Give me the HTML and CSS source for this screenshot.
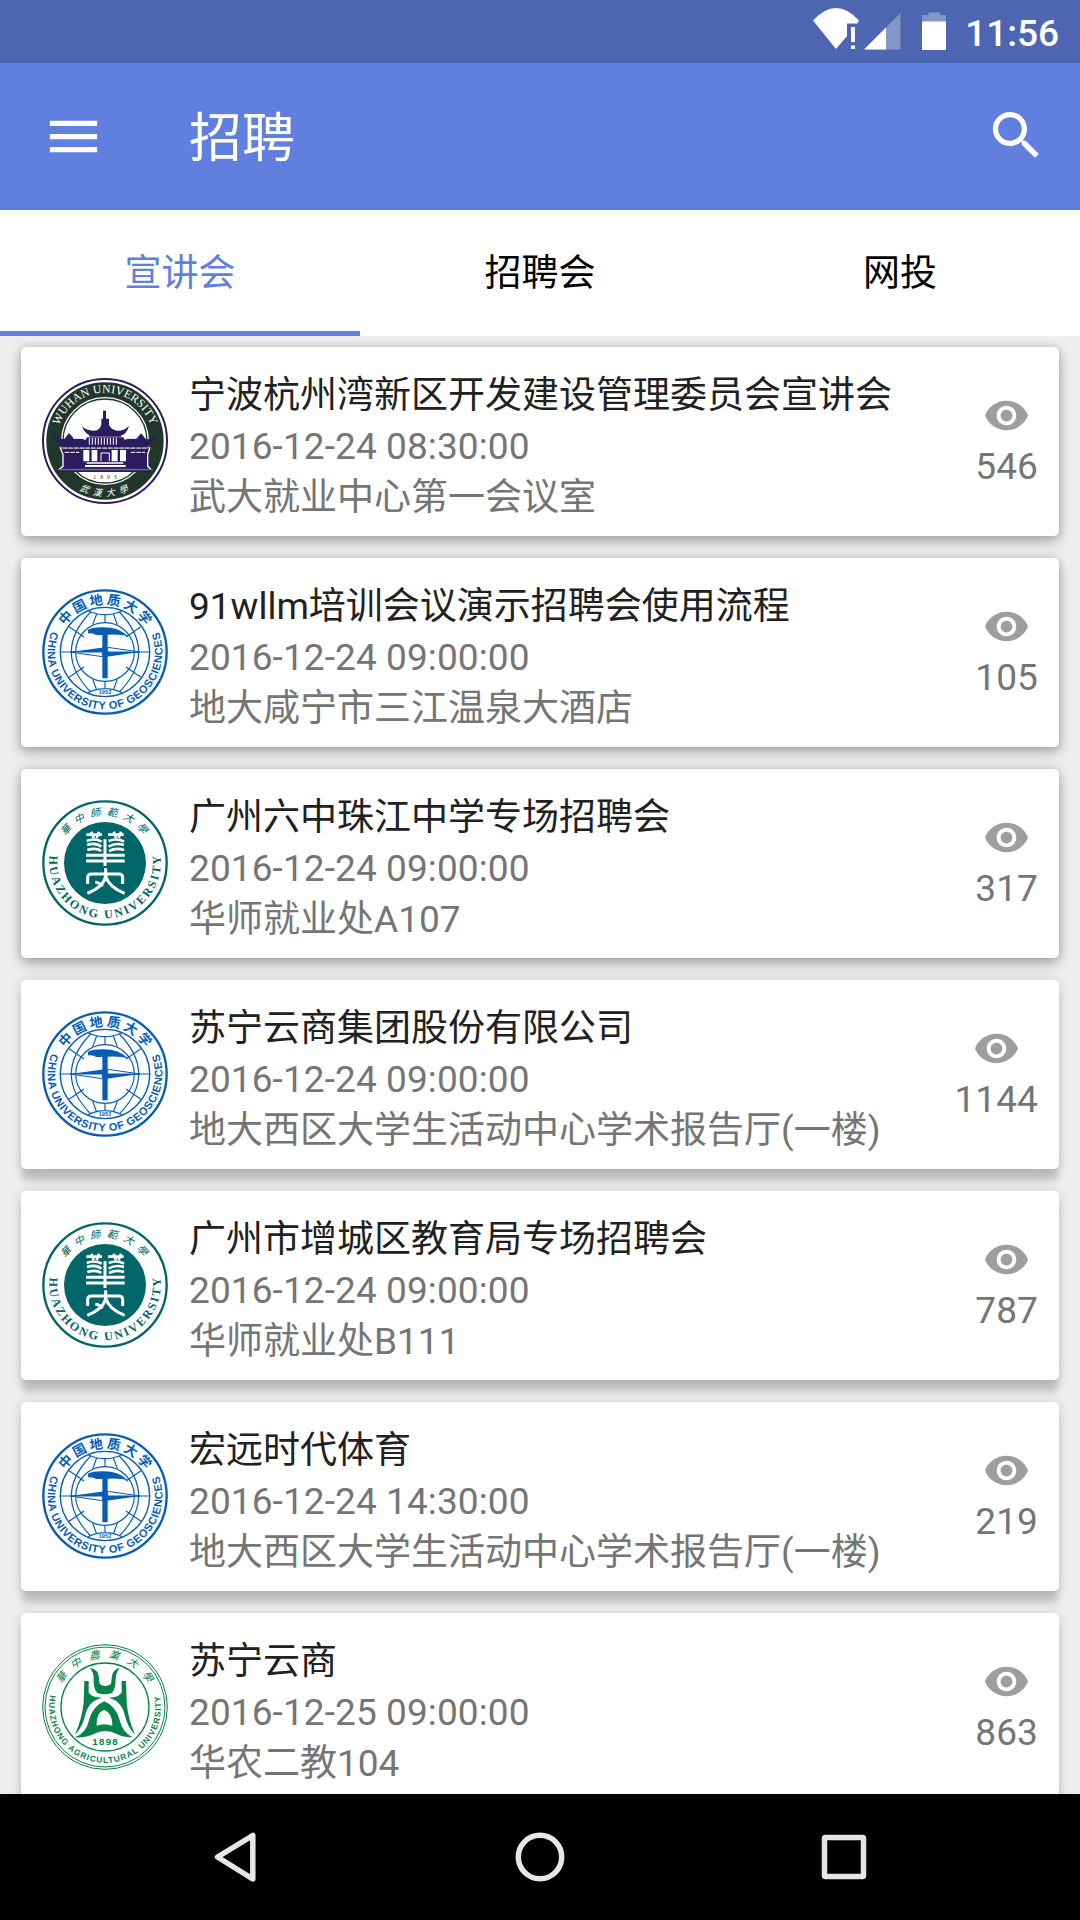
FILE: index.html
```html
<!DOCTYPE html>
<html lang="zh-CN">
<head>
<meta charset="utf-8">
<title>招聘</title>
<link rel="stylesheet" href="styles.css">
</head>
<body>
<div class="screen">
  <div class="statusbar">
    <svg class="signals" width="140" height="63" viewBox="0 0 140 63">
      <path d="M3 20.500Q26-4.500 49 20.500L47.500 23.500H37V36L26 49z" fill="#fff"/>
      <path d="M41 27h4v15h-4zM41 45.500h4V49h-4z" fill="#fff"/>
      <path d="M54 49.500L90.500 13v36.500z" fill="#8496c9"/>
      <path d="M54 49.500L76 27.500v22z" fill="#fff"/>
      <path d="M112 15h6.500v-2.500H130V15h6v7h-24z" fill="#8496c9"/>
      <path d="M112 21.500h24V50h-24z" fill="#fff"/>
    </svg>
    <span class="clock">11:56</span>
  </div>

  <header class="toolbar">
    <svg class="icon" viewBox="0 0 24 24"><path d="M3 18h18v-2H3v2zm0-5h18v-2H3v2zm0-7v2h18V6H3z"/></svg>
    <h1 class="heading">招聘</h1>
    <svg class="icon search" viewBox="0 0 24 24"><path d="M15.500 14h-.790l-.280-.270C15.410 12.590 16 11.110 16 9.500 16 5.910 13.090 3 9.500 3S3 5.910 3 9.500 5.910 16 9.500 16c1.610 0 3.090-.590 4.230-1.570l.270.280v.790l5 4.990L20.490 19l-4.990-5zm-6 0C7.010 14 5 11.990 5 9.500S7.010 5 9.500 5 14 7.010 14 9.500 11.990 14 9.500 14z"/></svg>
  </header>

  <nav class="tabs">
    <div class="tab active">宣讲会</div>
    <div class="tab">招聘会</div>
    <div class="tab">网投</div>
  </nav>

  <main class="list">
    <article class="card">
      <svg class="logo" viewBox="36 39 378 378">
        <circle cx="225" cy="228" r="186" fill="#fff" stroke="#2a1c5f" stroke-width="6"/>
        <circle cx="225" cy="228" r="154" fill="none" stroke="#22372b" stroke-width="44"/>
        <circle cx="225" cy="228" r="126" fill="none" stroke="#22372b" stroke-width="4"/>
        <path id="whu-top" d="M80 228A145 145 0 0 1 370 228" fill="none"/>
        <text class="whu-name"><textPath href="#whu-top" startOffset="50%">WUHAN UNIVERSITY</textPath></text>
        <path id="whu-bottom" d="M125 360A166 166 0 0 0 325 360" fill="none"/>
        <text class="whu-cn"><textPath href="#whu-bottom" startOffset="52%">武漢大學</textPath></text>
        <g fill="#2a1c5f">
          <path d="M219 137h9v24h9v18q6 15 24 18 22 1 36-15-5 20-19 28H177q-15-8-21-26 15 14 36 13 18-2 22-18v-18h5z"/>
          <path d="M178 207h96v8h-96z"/>
          <path d="M171 217h109l12 24H158z"/>
          <path d="M69 207q12 16 34 15l14-18 14 16h30v4h128v-4h32l12-15 15 18q20 0 33-14-4 19-22 28l-8 13H98l-9-14q-17-10-20-29z"/>
          <path d="M96 250h260v61H96z"/>
          <path d="M81 310h287v11H81z"/>
        </g>
        <path d="M178 219v20m9-20v20m9-20v20m9-20v20m9-20v20m9-20v20m9-20v20m9-20v20m9-20v20m9-20v20M130 220h34m121 0h34" stroke="#fff" stroke-width="3"/>
        <path d="M98 249h255M104 262h44m154 0h44" fill="none" stroke="#fff" stroke-width="3" stroke-dasharray="14 3"/>
        <path d="M160 255h18v34h-18zm25 0h17v34h-17zm60 0h18v34h-18zm25 0h18v34h-18zM170 292h110v4H170zm-5 8h122v6H165z" fill="#fff"/>
        <path d="M213 288v-24h25v24" fill="none" stroke="#fff" stroke-width="3"/>
        <path d="M90 247l9 21v36l-11 9M360 247l-7 21v36l10 9" fill="none" stroke="#fff" stroke-width="4"/>
        <path d="M83 314h285" stroke="#77717f" stroke-width="4"/>
        <text x="231" y="341" class="whu-year">1893</text>
      </svg>
      <div class="info"><h2>宁波杭州湾新区开发建设管理委员会宣讲会</h2><p class="date">2016-12-24 08:30:00</p><p>武大就业中心第一会议室</p></div>
      <div class="views">
        <svg class="eye" viewBox="0 0 24 24"><path id="eye" d="M12 4.500C7 4.500 2.730 7.610 1 12c1.730 4.390 6 7.500 11 7.500s9.270-3.110 11-7.500c-1.730-4.390-6-7.500-11-7.500zM12 17c-2.760 0-5-2.240-5-5s2.240-5 5-5 5 2.240 5 5-2.240 5-5 5zm0-8c-1.660 0-3 1.340-3 3s1.340 3 3 3 3-1.340 3-3-1.340-3-3-3z"/></svg>
        <span>546</span>
      </div>
    </article>

    <article class="card">
      <svg class="logo" viewBox="36 42 378 378">
        <g id="cug">
          <g fill="none" stroke="#075db3">
            <circle cx="225" cy="231" r="185" fill="#fff" stroke-width="7"/>
            <circle cx="225" cy="231" r="134" stroke-width="4"/>
            <g stroke-width="3.5">
              <circle cx="225" cy="231" r="88"/>
              <path d="M89 231h272M225 119v25M174 107q51 24 102 0M117 155l31 21M333 155l-31 21M117 307l31-21M333 307l-31-21M148 176l14 10M302 176l-14 10M148 286l14-10M302 286l-14-10"/>
              <path d="M182 111q-116 120 0 240M268 111q116 120 0 240M200 117l-12 32M250 117l12 32M200 345l-12-32M250 345l12-32M225 318v22M174 353q51-24 102 0"/>
            </g>
          </g>
          <path d="M174 164q18-8 47-7 46 0 75 28-22-8-63-6v131h-16V180h-20q-3-6-23-5z" fill="#075db3"/>
          <path d="M120 231l105-14v14zM225 231h105l-105 15z" fill="#075db3"/>
          <path d="M120 231l97 14v-14zM233 217l97 14h-97z" fill="#fff" stroke="#075db3" stroke-width="3"/>
          <text x="225" y="358" class="cug-year">1952</text>
          <path id="cug-top" d="M82 231A143 143 0 0 1 368 231" fill="none"/>
          <text class="cug-cn"><textPath href="#cug-top" startOffset="51%">中国地质大学</textPath></text>
          <path id="cug-bottom" d="M76 145A172 172 0 1 0 374 145" fill="none"/>
          <text class="cug-en"><textPath href="#cug-bottom" startOffset="50%">CHINA UNIVERSITY OF GEOSCIENCES</textPath></text>
        </g>
      </svg>
      <div class="info"><h2>91wllm培训会议演示招聘会使用流程</h2><p class="date">2016-12-24 09:00:00</p><p>地大咸宁市三江温泉大酒店</p></div>
      <div class="views"><svg class="eye" viewBox="0 0 24 24"><use href="#eye"/></svg><span>105</span></div>
    </article>

    <article class="card">
      <svg class="logo" viewBox="36 30 378 378">
        <g id="ccnu">
          <circle cx="225" cy="219" r="185" fill="#fff" stroke="#006669" stroke-width="7"/>
          <circle cx="225" cy="219" r="123" fill="#006669"/>
          <g fill="none" stroke="#fff" stroke-width="8">
            <path d="M169 134h47m18 0h47M184 125l7 19m16-19-7 19m51-19 7 19m15-19-7 19"/>
            <path d="M170 153q25-10 45 2m21-2q26-10 46 2M171 165q27-9 43 5m22 0q20-13 46-5M172 180q26-8 42 3m23 0q22-11 45-3"/>
            <path d="M225 148v80M168 196h116M168 213h116" stroke-width="9"/>
            <path d="M173 282v-20q0-10 12-10h81q12 0 12 10v20M227 235v25q-8 32-55 50M227 258q10 34 57 52M196 277q12 0 22 12" stroke-width="9"/>
          </g>
          <path id="ccnu-top" d="M83 219A142 142 0 0 1 367 219" fill="none"/>
          <text class="ccnu-cn"><textPath href="#ccnu-top" startOffset="51%">華中師範大學</textPath></text>
          <path id="ccnu-bottom" d="M80 135A167 167 0 1 0 370 135" fill="none"/>
          <text class="ccnu-en"><textPath href="#ccnu-bottom" startOffset="50.5%">HUAZHONG UNIVERSITY</textPath></text>
        </g>
      </svg>
      <div class="info"><h2>广州六中珠江中学专场招聘会</h2><p class="date">2016-12-24 09:00:00</p><p>华师就业处A107</p></div>
      <div class="views"><svg class="eye" viewBox="0 0 24 24"><use href="#eye"/></svg><span>317</span></div>
    </article>

    <article class="card low">
      <svg class="logo" viewBox="36 42 378 378"><use href="#cug"/></svg>
      <div class="info"><h2>苏宁云商集团股份有限公司</h2><p class="date">2016-12-24 09:00:00</p><p>地大西区大学生活动中心学术报告厅(一楼)</p></div>
      <div class="views"><svg class="eye" viewBox="0 0 24 24"><use href="#eye"/></svg><span>1144</span></div>
    </article>

    <article class="card low">
      <svg class="logo" viewBox="36 30 378 378"><use href="#ccnu"/></svg>
      <div class="info"><h2>广州市增城区教育局专场招聘会</h2><p class="date">2016-12-24 09:00:00</p><p>华师就业处B111</p></div>
      <div class="views"><svg class="eye" viewBox="0 0 24 24"><use href="#eye"/></svg><span>787</span></div>
    </article>

    <article class="card low">
      <svg class="logo" viewBox="36 42 378 378"><use href="#cug"/></svg>
      <div class="info"><h2>宏远时代体育</h2><p class="date">2016-12-24 14:30:00</p><p>地大西区大学生活动中心学术报告厅(一楼)</p></div>
      <div class="views"><svg class="eye" viewBox="0 0 24 24"><use href="#eye"/></svg><span>219</span></div>
    </article>

    <article class="card low">
      <svg class="logo" viewBox="36 36 378 378">
        <g fill="none" stroke="#07834a">
          <circle cx="225" cy="225" r="187" fill="#fff" stroke-width="3"/>
          <circle cx="225" cy="225" r="180" stroke-width="3"/>
          <circle cx="225" cy="225" r="132" stroke-width="4"/>
        </g>
        <g fill="#07834a">
          <path d="M179 107q26 6 27 25l3 24q16 12 34 0l3-24q2-19 24-25-12 13-13 32 0 32-10 43-22 9-46 0-11-11-10-43 0-19-12-32z"/>
          <path d="M163 147h13v34q4 15 42 17-40 5-52 50-9 38-31 60 22-50 26-98zM288 147h-13v34q-5 15-41 17 38 5 50 50 9 38 31 60-22-50-25-98z"/>
          <path d="M134 316q35-12 43-51 11-43 46-57 35 14 46 57 10 39 40 51-29 1-47-9-37-20-72 0-21 11-56 9z"/>
        </g>
        <path d="M200 281q-1-41 23-47 25 9 24 47-25-9-47 0z" fill="#fff"/>
        <text x="227" y="339" class="hzau-year">1898</text>
        <path id="hzau-top" d="M79 225A146 146 0 0 1 371 225" fill="none"/>
        <text class="hzau-cn"><textPath href="#hzau-top" startOffset="52%">華中農業大學</textPath></text>
        <path id="hzau-bottom" d="M80 140A168 168 0 1 0 370 140" fill="none"/>
        <text class="hzau-en"><textPath href="#hzau-bottom" startOffset="50%">HUAZHONG AGRICULTURAL UNIVERSITY</textPath></text>
      </svg>
      <div class="info"><h2>苏宁云商</h2><p class="date">2016-12-25 09:00:00</p><p>华农二教104</p></div>
      <div class="views"><svg class="eye" viewBox="0 0 24 24"><use href="#eye"/></svg><span>863</span></div>
    </article>
  </main>

  <footer class="navbar">
    <svg viewBox="0 0 60 60"><path d="M11.500 30L46.800 8.500v43.500z"/></svg>
    <svg viewBox="0 0 60 60"><circle cx="30" cy="30" r="21.700"/></svg>
    <svg viewBox="0 0 60 60"><rect x="10.500" y="10.500" width="39" height="39" rx="1"/></svg>
  </footer>
</div>
</body>
</html>
```

FILE: styles.css
```css
* { box-sizing: border-box; margin: 0; padding: 0; }

body {
  width: 1080px;
  height: 1920px;
  overflow: hidden;
  font-family: Roboto, "Noto Sans CJK SC", sans-serif;
  font-size: 37px;
  background: #eee;
}

.screen { display: flex; flex-direction: column; height: 1920px; }

.statusbar {
  display: flex;
  flex: none;
  justify-content: flex-end;
  height: 63px;
  padding-right: 21px;
  background: #4e66b1;
  color: #fff;
}
.signals { margin-right: 15px; }
.clock { font-weight: 500; line-height: 67px; }

.toolbar {
  display: flex;
  flex: none;
  align-items: center;
  height: 147px;
  padding: 0 32px 0 42px;
  background: #617fde;
  color: #fff;
}
.icon { width: 63px; height: 63px; fill: currentColor; }
.search { margin-bottom: 2px; }
.heading {
  flex: 1;
  padding: 5px 0 0 84px;
  font-size: 53px;
  font-weight: 400;
  line-height: 63px;
}

.tabs {
  display: flex;
  flex: none;
  height: 126px;
  background: #fff;
}
.tab {
  flex: 1;
  padding-top: 7px;
  border-bottom: 5px solid transparent;
  color: #000;
  line-height: 114px;
  text-align: center;
}
.tab.active { color: #617fde; border-bottom-color: #617fde; }

.list {
  display: flex;
  flex: 1;
  flex-direction: column;
  gap: 22px;
  min-height: 0;
  padding: 11px 21px 0;
  overflow: hidden;
}
.card {
  display: flex;
  flex: none;
  height: 189px;
  padding: 0 21px;
  border-radius: 5px;
  background: #fff;
  box-shadow: 0 6px 14px rgba(0, 0, 0, .26), 0 0 8px rgba(0, 0, 0, .16);
}
.card.low { box-shadow: 0 13px 6px -1px rgba(0, 0, 0, .16), 0 2px 14px rgba(0, 0, 0, .16); }
.logo { flex: none; width: 126px; height: 126px; margin-top: 31px; }
.info { flex: 1; padding: 23px 0 0 21px; line-height: 51px; white-space: nowrap; }
.info h2 { color: #212121; font-size: inherit; font-weight: 400; }
.info p { color: #757575; }
.info .date { letter-spacing: .1px; }
.views {
  display: flex;
  flex-direction: column;
  align-items: center;
  gap: 6px;
  padding-top: 45px;
  color: #757575;
  line-height: 43px;
  letter-spacing: .1px;
}
.eye { width: 47px; height: 47px; fill: #9e9e9e; }

.navbar {
  display: flex;
  flex: none;
  align-items: center;
  justify-content: center;
  gap: 244px;
  height: 126px;
  background: #000;
}
.navbar svg {
  width: 60px;
  height: 60px;
  fill: none;
  stroke: #e6e6e6;
  stroke-width: 5.5;
  stroke-linejoin: round;
}

/* lettering inside the university seals */
.logo text { text-anchor: middle; }
.logo .whu-name { fill: #fff; font: 35px "Liberation Serif", serif; letter-spacing: .5px; }
.logo .whu-cn { fill: #fff; font: italic 27px "Noto Sans CJK TC", sans-serif; letter-spacing: 15px; }
.logo .whu-year { fill: #22372b; font: 17px "Liberation Serif", serif; letter-spacing: 12px; }
.logo .cug-cn { fill: #075db3; font: bold 40px "Noto Sans CJK SC", sans-serif; letter-spacing: 9px; }
.logo .cug-en { fill: #075db3; font: bold 33px "Liberation Sans", sans-serif; letter-spacing: 1.6px; }
.logo .cug-year { fill: #075db3; font: bold 17px "Liberation Sans", sans-serif; }
.logo .ccnu-cn { fill: #006669; font: italic 31px "Noto Sans CJK TC", sans-serif; letter-spacing: 17px; }
.logo .ccnu-en { fill: #006669; font: bold 36px "Liberation Serif", serif; letter-spacing: 6.5px; }
.logo .hzau-cn { fill: #07834a; font: italic 32px "Noto Sans CJK TC", sans-serif; letter-spacing: 24px; }
.logo .hzau-en { fill: #07834a; font: bold 25px "Liberation Sans", sans-serif; letter-spacing: 3px; }
.logo .hzau-year { fill: #07834a; font: bold 29px "Liberation Sans", sans-serif; letter-spacing: 4px; }
```
